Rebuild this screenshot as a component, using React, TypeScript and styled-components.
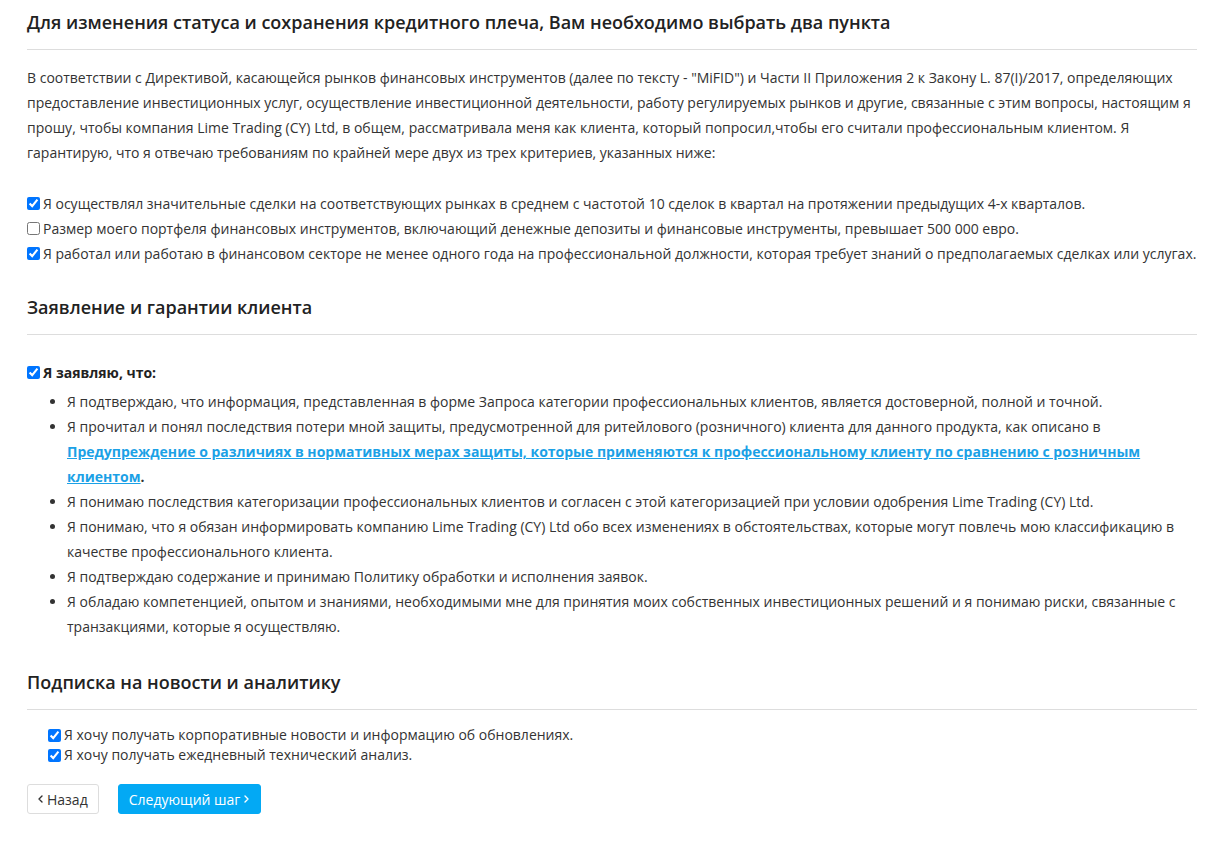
import styled, { createGlobalStyle } from "styled-components";

const GlobalStyle = createGlobalStyle`
  html, body {
    margin: 0;
    padding: 0;
    background: #fff;
  }
  body {
    font-family: "Open Sans", "Liberation Sans", sans-serif;
    font-size: 14px;
    color: #333;
  }
`;

const criteria = [
  { checked: true, text: "Я осуществлял значительные сделки на соответствующих рынках в среднем с частотой 10 сделок в квартал на протяжении предыдущих 4-х кварталов." },
  { checked: false, text: "Размер моего портфеля финансовых инструментов, включающий денежные депозиты и финансовые инструменты, превышает 500 000 евро." },
  { checked: true, text: "Я работал или работаю в финансовом секторе не менее одного года на профессиональной должности, которая требует знаний о предполагаемых сделках или услугах." },
];

const subscriptions = [
  "Я хочу получать корпоративные новости и информацию об обновлениях.",
  "Я хочу получать ежедневный технический анализ.",
];

const Chevron = ({ dir }: { dir: "left" | "right" }) => (
  <svg width="5" height="8" viewBox="0 0 5 8" fill="none">
    <polyline
      points={dir === "left" ? "4,1 1,4 4,7" : "1,1 4,4 1,7"}
      stroke="currentColor"
      strokeWidth="1.4"
      strokeLinecap="round"
      strokeLinejoin="round"
    />
  </svg>
);

export default function App() {
  return (
    <>
      <GlobalStyle />
      <Page>
        <Title>Для изменения статуса и сохранения кредитного плеча, Вам необходимо выбрать два пункта</Title>
        <Divider />
        <Intro>
          В соответствии с Директивой, касающейся рынков финансовых инструментов (далее по тексту - "MiFID") и Части II Приложения 2 к Закону L. 87(I)/2017, определяющих предоставление инвестиционных услуг, осуществление инвестиционной деятельности, работу регулируемых рынков и другие, связанные с этим вопросы, настоящим я прошу, чтобы компания Lime Trading (CY) Ltd, в общем, рассматривала меня как клиента, который попросил,чтобы его считали профессиональным клиентом. Я гарантирую, что я отвечаю требованиям по крайней мере двух из трех критериев, указанных ниже:
        </Intro>
        <CheckList>
          {criteria.map((c, i) => (
            <CheckRow key={i}>
              <Box type="checkbox" defaultChecked={c.checked} />
              {c.text}
            </CheckRow>
          ))}
        </CheckList>

        <Title $top={29}>Заявление и гарантии клиента</Title>
        <Divider />
        <Declare>
          <Box type="checkbox" defaultChecked />
          Я заявляю, что:
        </Declare>
        <Bullets>
          <li>Я подтверждаю, что информация, представленная в форме Запроса категории профессиональных клиентов, является достоверной, полной и точной.</li>
          <li>
            Я прочитал и понял последствия потери мной защиты, предусмотренной для ритейлового (розничного) клиента для данного продукта, как описано в{" "}
            <strong>
              <DocLink href="#">Предупреждение о различиях в нормативных мерах защиты, которые применяются к профессиональному клиенту по сравнению с розничным клиентом</DocLink>.
            </strong>
          </li>
          <li>Я понимаю последствия категоризации профессиональных клиентов и согласен с этой категоризацией при условии одобрения Lime Trading (CY) Ltd.</li>
          <li>Я понимаю, что я обязан информировать компанию Lime Trading (CY) Ltd обо всех изменениях в обстоятельствах, которые могут повлечь мою классификацию в качестве профессионального клиента.</li>
          <li>Я подтверждаю содержание и принимаю Политику обработки и исполнения заявок.</li>
          <li>Я обладаю компетенцией, опытом и знаниями, необходимыми мне для принятия моих собственных инвестиционных решений и я понимаю риски, связанные с транзакциями, которые я осуществляю.</li>
        </Bullets>

        <Title $top={31}>Подписка на новости и аналитику</Title>
        <Divider $bottom={15} />
        <SubList>
          {subscriptions.map((s, i) => (
            <SubRow key={i}>
              <Box type="checkbox" defaultChecked />
              {s}
            </SubRow>
          ))}
        </SubList>

        <Actions>
          <Button>
            <Chevron dir="left" />
            Назад
          </Button>
          <Button $primary>
            Следующий шаг
            <Chevron dir="right" />
          </Button>
        </Actions>
      </Page>
    </>
  );
}

const Page = styled.div`
  width: 1170px;
  margin-left: 27px;
  padding: 10px 0 30px;
`;

const Title = styled.h2<{ $top?: number }>`
  margin: ${(p) => p.$top ?? 0}px 0 0;
  font-size: 18px;
  line-height: 24px;
  font-weight: 600;
  color: #222;
`;

const Divider = styled.hr<{ $bottom?: number }>`
  border: none;
  border-top: 1px solid #ddd;
  margin: 15px 0 ${(p) => p.$bottom ?? 15}px;
`;

const Intro = styled.p`
  margin: 0;
  line-height: 25px;
`;

const CheckList = styled.div`
  margin-top: 26px;
`;

const CheckRow = styled.label`
  display: flex;
  align-items: center;
  line-height: 25px;
`;

const Box = styled.input`
  width: 13px;
  height: 13px;
  margin: 0 3px 0 0;
  flex-shrink: 0;
`;

const Declare = styled.label`
  display: flex;
  align-items: center;
  margin-top: 25px;
  line-height: 25px;
  font-weight: 700;
  color: #222;
`;

const Bullets = styled.ul`
  margin: 4px 0 0;
  padding-left: 40px;
  line-height: 25px;
`;

const DocLink = styled.a`
  color: #1ba1e6;
  text-decoration: underline;
`;

const SubList = styled.div`
  padding-left: 21px;
`;

const SubRow = styled.label`
  display: flex;
  align-items: center;
  line-height: 20px;
`;

const Actions = styled.div`
  display: flex;
  gap: 19px;
  margin-top: 19px;
`;

const Button = styled.button<{ $primary?: boolean }>`
  display: inline-flex;
  align-items: center;
  gap: 4px;
  height: 30px;
  padding: ${(p) => (p.$primary ? "0 11px 0 10px" : "0 10px 0 10px")};
  font-family: inherit;
  font-size: 14px;
  border-radius: 3px;
  cursor: pointer;
  border: 1px solid ${(p) => (p.$primary ? "#03a9f4" : "#ddd")};
  background: ${(p) => (p.$primary ? "#03a9f4" : "#fff")};
  color: ${(p) => (p.$primary ? "#fff" : "#333")};
`;
